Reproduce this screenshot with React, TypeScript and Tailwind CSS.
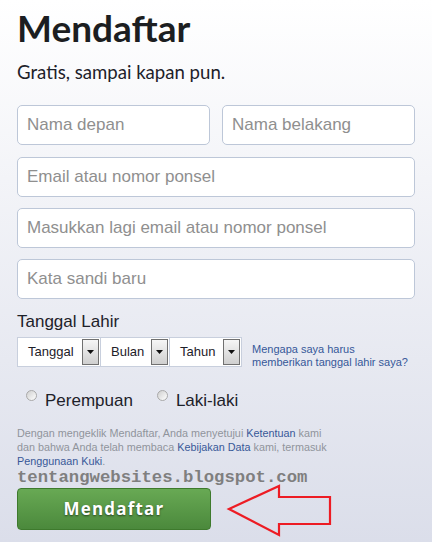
import React from "react";

const inputCls =
  "h-[40px] w-full rounded-[5px] border border-[#bdc7d8] bg-white px-[9px] text-[17px] text-[#1d2129] placeholder:text-[#8f8f8f] outline-none [font-family:'Liberation_Sans',Arial,sans-serif]";

function SelectBox({ label, width }: { label: string; width: string }) {
  return (
    <div className={`flex h-[28px] items-center bg-white ${width}`}>
      <span className="flex-1 pl-[10px] text-[13px] text-[#1d2129]">{label}</span>
      <span className="mr-[1px] flex h-[26px] w-[17px] items-center justify-center border border-[#707070] bg-gradient-to-b from-[#f6f6f6] to-[#cfcfcf]">
        <svg width="7" height="4" viewBox="0 0 7 4">
          <path d="M0 0h7L3.5 4z" fill="#111" />
        </svg>
      </span>
    </div>
  );
}

function Radio({ label }: { label: string }) {
  return (
    <label className="flex items-start gap-[8px]">
      <span className="h-[11px] w-[11px] rounded-full border border-[#a9a9a9] bg-gradient-to-br from-[#cfcfcf] to-white" />
      <span className="text-[17px] leading-[22px] text-[#1d2129]">{label}</span>
    </label>
  );
}

export default function App() {
  return (
    <div className="h-[542px] w-[432px] overflow-hidden bg-gradient-to-b from-white to-[#dbdeea] px-[17px] pt-[6px] [font-family:'Liberation_Sans',Arial,sans-serif]">
      <h1 className="text-[37px] font-bold leading-[44px] text-[#1c1e21] [font-family:Lato,sans-serif]">
        Mendaftar
      </h1>
      <p className="mt-[10px] text-[18.6px] leading-[24px] text-[#1d2129] [font-family:Lato,sans-serif]">
        Gratis, sampai kapan pun.
      </p>

      <div className="mt-[21px] flex flex-col gap-[11px]">
        <div className="mb-[1px] flex gap-[12px]">
          <input className={inputCls} placeholder="Nama depan" />
          <input className={inputCls} placeholder="Nama belakang" />
        </div>
        <input className={inputCls} placeholder="Email atau nomor ponsel" />
        <input className={inputCls} placeholder="Masukkan lagi email atau nomor ponsel" />
        <input className={inputCls} placeholder="Kata sandi baru" />
      </div>

      <div className="mt-[12px] text-[17px] leading-[22px] text-[#1d2129]">Tanggal Lahir</div>
      <div className="mt-[4px] flex items-start">
        <div className="flex gap-[1px] border border-[#c8cfdd] bg-[#c8cfdd]">
          <SelectBox label="Tanggal" width="w-[82px]" />
          <SelectBox label="Bulan" width="w-[68px]" />
          <SelectBox label="Tahun" width="w-[71px]" />
        </div>
        <a className="ml-[10px] mt-[6px] text-[11px] leading-[13px] text-[#365899]">
          Mengapa saya harus
          <br />
          memberikan tanggal lahir saya?
        </a>
      </div>

      <div className="mt-[21px] flex gap-[24px] pl-[9px]">
        <Radio label="Perempuan" />
        <Radio label="Laki-laki" />
      </div>

      <p className="mt-[14px] w-[318px] text-[10.8px] leading-[14px] text-[#90949c]">
        Dengan mengeklik Mendaftar, Anda menyetujui{" "}
        <span className="text-[#385898]">Ketentuan</span> kami dan bahwa Anda telah membaca{" "}
        <span className="text-[#385898]">Kebijakan Data</span> kami, termasuk{" "}
        <span className="text-[#385898]">Penggunaan Kuki</span>.
      </p>

      <div className="mt-[1px] text-[17.3px] font-bold leading-[17px] text-[#7f7f7f] [font-family:'Liberation_Mono',monospace]">
        tentangwebsites.blogspot.com
      </div>

      <div className="mt-[2px] flex items-start">
        <button className="h-[42px] w-[194px] rounded-[4px] border border-[#3e7a2d] bg-gradient-to-b from-[#68a954] to-[#4b893c] text-[17px] font-bold tracking-[1.2px] text-white [text-shadow:0_1px_2px_rgba(0,0,0,0.55)] [font-family:'Open_Sans',sans-serif]">
          Mendaftar
        </button>
        <svg width="114" height="60" viewBox="0 0 114 60" className="-mt-[8px] ml-[9px]">
          <path
            d="M9 29 L59 6 L59 17 L110 17 L110 44 L59 44 L59 55 Z"
            fill="none"
            stroke="#ed1c24"
            strokeWidth="2.2"
          />
        </svg>
      </div>
    </div>
  );
}
